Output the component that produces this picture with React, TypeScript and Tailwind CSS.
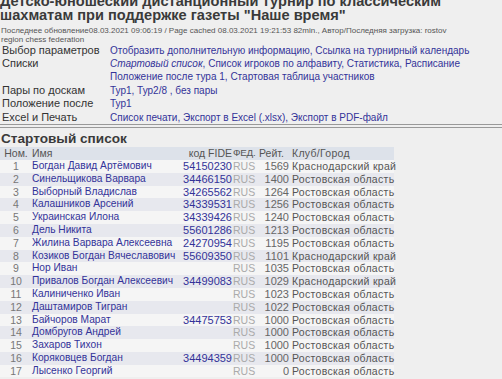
import React from "react";

const params: [string, React.ReactNode][] = [
  ["Выбор параметров", <>Отобразить дополнительную информацию, Ссылка на турнирный календарь</>],
  [
    "Списки",
    <>
      <i>Стартовый список</i>, Список игроков по алфавиту, Статистика, Расписание
      <br />
      Положение после тура 1, Стартовая таблица участников
    </>,
  ],
  ["Пары по доскам", <>Тур1, Тур2/8 , без пары</>],
  ["Положение после", <>Тур1</>],
  ["Excel и Печать", <>Список печати, Экспорт в Excel (.xlsx), Экспорт в PDF-файл</>],
];

const rows: [number, string, string, string, string][] = [
  [1, "Богдан Давид Артёмович", "54150230", "1569", "Краснодарский край"],
  [2, "Синельщикова Варвара", "34466150", "1400", "Ростовская область"],
  [3, "Выборный Владислав", "34265562", "1264", "Ростовская область"],
  [4, "Калашников Арсений", "34339531", "1256", "Ростовская область"],
  [5, "Украинская Илона", "34339426", "1240", "Ростовская область"],
  [6, "Дель Никита", "55601286", "1213", "Ростовская область"],
  [7, "Жилина Варвара Алексеевна", "24270954", "1195", "Ростовская область"],
  [8, "Козиков Богдан Вячеславович", "55609350", "1101", "Краснодарский край"],
  [9, "Нор Иван", "", "1035", "Ростовская область"],
  [10, "Привалов Богдан Алексеевич", "34499083", "1029", "Краснодарский край"],
  [11, "Калиниченко Иван", "", "1023", "Ростовская область"],
  [12, "Даштамиров Тигран", "", "1022", "Ростовская область"],
  [13, "Байчоров Марат", "34475753", "1000", "Ростовская область"],
  [14, "Домбругов Андрей", "", "1000", "Ростовская область"],
  [15, "Захаров Тихон", "", "1000", "Ростовская область"],
  [16, "Коряковцев Богдан", "34494359", "1000", "Ростовская область"],
  [17, "Лысенко Георгий", "", "0", "Ростовская область"],
];

const cols = "grid grid-cols-[32px_149px_51px_26px_31px_105px]";

export default function App() {
  return (
    <div className="w-[502px] h-[379px] overflow-hidden bg-[#efefef] font-['Liberation_Sans',Arial,sans-serif] text-[#444]">
      <h2 className="mt-[-6px] text-[14.6px] font-bold leading-[14px] text-[#3a3a3a] whitespace-nowrap">
        Детско-юношеский дистанционный турнир по классическим
        <br />
        шахматам при поддержке газеты "Наше время"
      </h2>
      <div className="mt-[3.5px] pl-[1px] text-[8px] leading-[9px] text-[#555] whitespace-nowrap">
        Последнее обновление08.03.2021 09:06:19 / Page cached 08.03.2021 19:21:53 82min., Автор/Последняя загрузка: rostov
        <br />
        region chess federation
      </div>
      <div className="grid grid-cols-[108px_1fr] pl-[2px] leading-[13.4px]">
        {params.map(([label, value]) => (
          <React.Fragment key={label}>
            <div className="text-[11px] text-[#333]">{label}</div>
            <div className="text-[10px] text-[#333399] whitespace-nowrap">{value}</div>
          </React.Fragment>
        ))}
      </div>
      <div className="h-[4px] border-y border-[#999]" />
      <h3 className="mt-[3px] pl-[1px] text-[13.6px] font-bold leading-[16px] text-[#3a3a3a]">Стартовый список</h3>
      <div className="w-[394px] text-[10.5px] leading-[12.8px]">
        <div className={`${cols} h-[13px] bg-[#dde2ea] text-[#555]`}>
          <div className="text-center">Ном.</div>
          <div>Имя</div>
          <div className="text-right">код FIDE</div>
          <div className="pl-[1px] text-[9.8px] tracking-[-0.2px]">ФЕД.</div>
          <div className="pl-[1px]">Рейт.</div>
          <div className="pl-[3px] tracking-[0.3px]">Клуб/Город</div>
        </div>
        {rows.map(([n, name, fide, rating, club]) => (
          <div key={n} className={`${cols} ${n % 2 === 1 ? "bg-[#f5f5f5]" : "bg-[#e7e8ee]"}`}>
            <div className="text-center text-[#777]">{n}</div>
            <div className="text-[10.2px] text-[#333399] whitespace-nowrap">{name}</div>
            <div className="text-right text-[11px] text-[#333399]">{fide}</div>
            <div className="pl-[1px] text-[#aaa]">RUS</div>
            <div className="text-right text-[11px] text-[#666]">{rating}</div>
            <div className="pl-[3px] tracking-[0.3px] text-[#555] whitespace-nowrap">{club}</div>
          </div>
        ))}
      </div>
    </div>
  );
}
